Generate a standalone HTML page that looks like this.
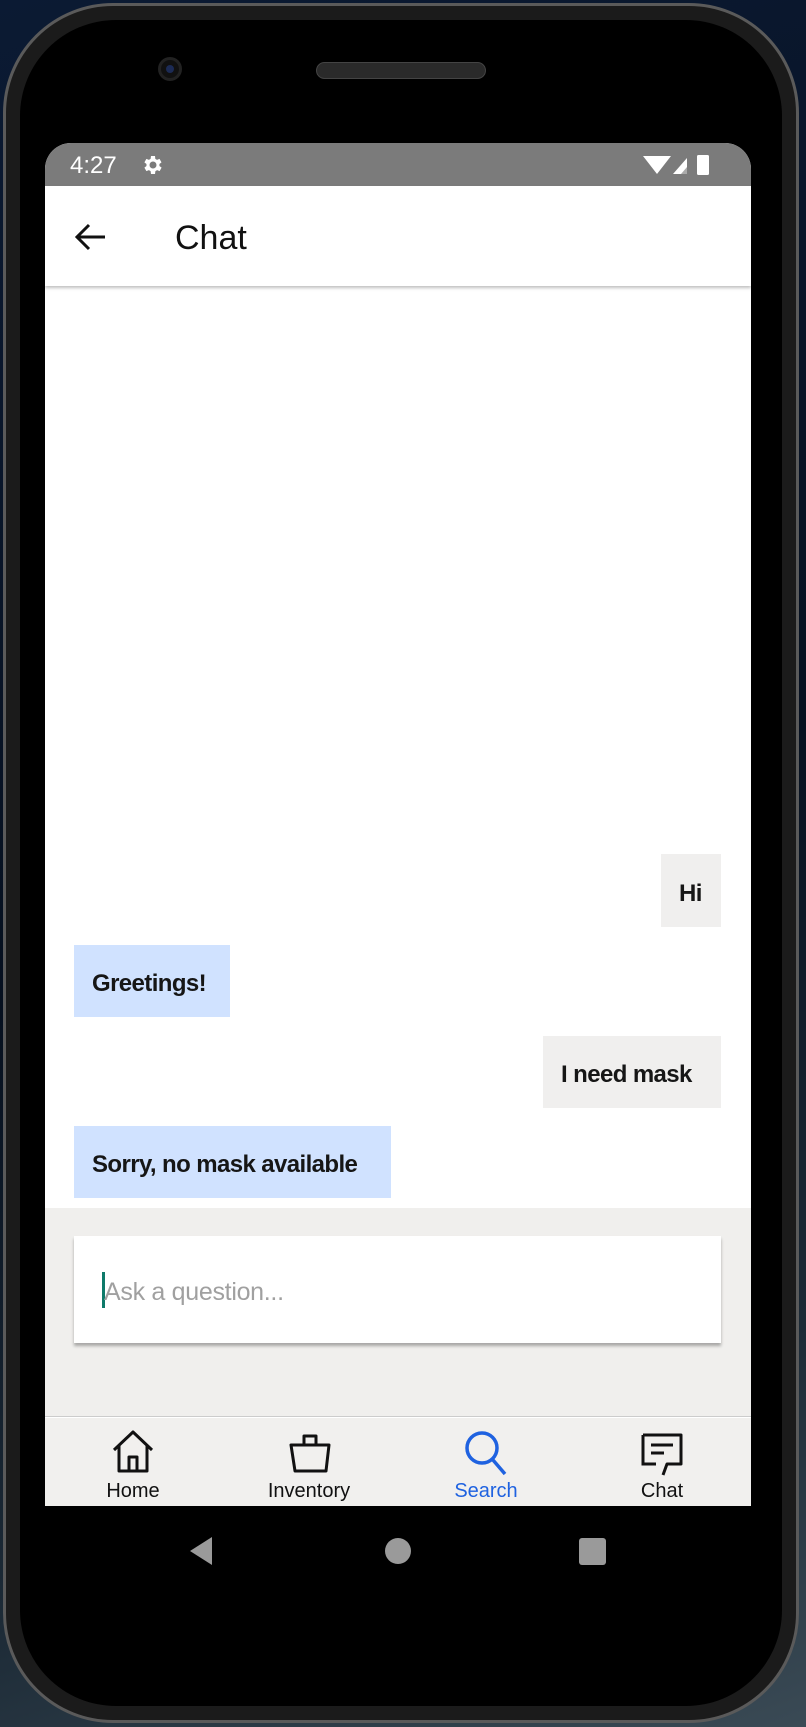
<!DOCTYPE html>
<html><head><meta charset="utf-8"><style>
*{margin:0;padding:0;box-sizing:border-box}
body{width:806px;height:1727px;overflow:hidden;background:linear-gradient(160deg,#0b1a33 0%,#06101f 50%,#1c2a36 80%,#3a4a55 100%);font-family:"Liberation Sans",sans-serif;position:relative}
.phone{position:absolute;left:3px;top:3px;width:796px;height:1720px;border-radius:110px;background:#1b1b1b;border:3px solid #5a5a5a}
.inner{position:absolute;left:14px;top:14px;right:14px;bottom:14px;border-radius:96px;background:#000}
.abs{position:absolute}
.screen{position:absolute;left:45px;top:143px;width:706px;height:1363px;background:#fff;border-radius:26px 26px 0 0;overflow:hidden}
.status{height:43px;background:#7b7b7b;color:#fff;font-size:24px;position:relative}
.appbar{height:100px;background:#fff;box-shadow:0 2px 3px rgba(0,0,0,.25);position:relative;z-index:2}
.b{position:absolute;font-size:24px;font-weight:bold;letter-spacing:-0.6px;color:#161616;display:flex;align-items:center;padding-left:18px;padding-top:6px;white-space:nowrap}
.tab{position:absolute;top:1337px;width:176px;text-align:center;font-size:20px;color:#111}
</style></head><body>
<div class="phone"><div class="inner"></div></div>
<div class="abs" style="left:158px;top:57px;width:24px;height:24px;border-radius:50%;background:#111;border:3px solid #222"><div style="margin:5px;width:8px;height:8px;border-radius:50%;background:#1c2b55"></div></div>
<div class="abs" style="left:316px;top:62px;width:170px;height:17px;border-radius:9px;background:#2a2a2a;border:1px solid #444"></div>
<div class="screen">
 <div class="status">
  <span class="abs" style="left:25px;top:9px">4:27</span>
  <svg class="abs" style="left:95px;top:10px" width="24" height="24" viewBox="0 0 24 24"><path fill="#fff" d="M19.4 13a7.5 7.5 0 0 0 0-2l2.1-1.6-2-3.5-2.5 1a7.3 7.3 0 0 0-1.7-1L15 3h-4l-.4 2.9a7.3 7.3 0 0 0-1.7 1l-2.5-1-2 3.5L6.5 11a7.5 7.5 0 0 0 0 2l-2.1 1.6 2 3.5 2.5-1c.5.4 1.1.7 1.7 1L11 21h4l.4-2.9c.6-.3 1.2-.6 1.7-1l2.5 1 2-3.5zM13 15.5a3.5 3.5 0 1 1 0-7 3.5 3.5 0 0 1 0 7z"/></svg>
  <svg class="abs" style="left:598px;top:9px" width="80" height="26" viewBox="0 0 80 26"><path fill="#fff" d="M0 4h28L14 22z"/><path fill="#fff" d="M30 22L44 6v16z"/><path fill="#aaa" d="M38 22l6-7v7z"/><rect x="54" y="3" width="12" height="20" rx="1.5" fill="#fff"/></svg>
 </div>
 <div class="appbar">
  <svg class="abs" style="left:28px;top:36px" width="34" height="30" viewBox="0 0 34 30"><path d="M32 15H4M16 3L4 15l12 12" stroke="#111" stroke-width="3" fill="none"/></svg>
  <span class="abs" style="left:130px;top:33px;font-size:34px;color:#111">Chat</span>
 </div>
 <div class="b" style="left:616px;top:711px;width:60px;height:73px;background:#f0efee">Hi</div>
 <div class="b" style="left:29px;top:802px;width:156px;height:72px;background:#d0e2ff">Greetings!</div>
 <div class="b" style="left:498px;top:893px;width:178px;height:72px;background:#f0efee">I need mask</div>
 <div class="b" style="left:29px;top:983px;width:317px;height:72px;background:#d0e2ff">Sorry, no mask available</div>
 <div class="abs" style="left:0;top:1065px;width:706px;height:209px;background:#f0efed;border-bottom:1px solid #ccc"></div>
 <div class="abs" style="left:29px;top:1093px;width:647px;height:107px;background:#fff;box-shadow:0 3px 3px rgba(0,0,0,.3)">
  <div class="abs" style="left:28px;top:36px;width:3px;height:36px;background:#0e7a6a"></div>
  <span class="abs" style="left:30px;top:42px;font-size:25px;color:#a0a0a0;letter-spacing:-0.3px">Ask a question...</span>
 </div>
 <div class="abs" style="left:0;top:1275px;width:706px;height:88px;background:#f1f0ee"></div>
 <svg class="abs" style="left:65px;top:1286px" width="46" height="46" viewBox="0 0 46 46"><path d="M4 21L23 3l19 18M9 17v25h28V17M19 42V28h8v14" stroke="#111" stroke-width="3" fill="none" stroke-linejoin="round"/></svg>
 <svg class="abs" style="left:242px;top:1288px" width="46" height="46" viewBox="0 0 46 46"><path d="M4 14h38l-3 26H8zM17 14V5h12v9" stroke="#111" stroke-width="3" fill="none" stroke-linejoin="round"/></svg>
 <svg class="abs" style="left:418px;top:1286px" width="48" height="50" viewBox="0 0 48 50"><circle cx="19" cy="19" r="15" stroke="#1f62e0" stroke-width="3.5" fill="none"/><path d="M30 31l12 14" stroke="#1f62e0" stroke-width="3.5"/></svg>
 <svg class="abs" style="left:594px;top:1288px" width="48" height="48" viewBox="0 0 48 48"><path d="M4 4h38v29H28l-4 11" stroke="#111" stroke-width="3" fill="none" stroke-linejoin="round"/><path d="M4 4v29h13" stroke="#111" stroke-width="3" fill="none"/><path d="M12 14h22M12 22h13" stroke="#111" stroke-width="3"/></svg>
 <div class="tab" style="left:0">Home</div>
 <div class="tab" style="left:176px">Inventory</div>
 <div class="tab" style="left:353px;color:#1f62e0">Search</div>
 <div class="tab" style="left:529px">Chat</div>
</div>
<svg class="abs" style="left:188px;top:1536px" width="26" height="30" viewBox="0 0 26 30"><path d="M24 1L2 15l22 14z" fill="#9a9a9a"/></svg>
<div class="abs" style="left:385px;top:1538px;width:26px;height:26px;border-radius:50%;background:#9a9a9a"></div>
<div class="abs" style="left:579px;top:1538px;width:27px;height:27px;border-radius:3px;background:#9a9a9a"></div>
</body></html>
